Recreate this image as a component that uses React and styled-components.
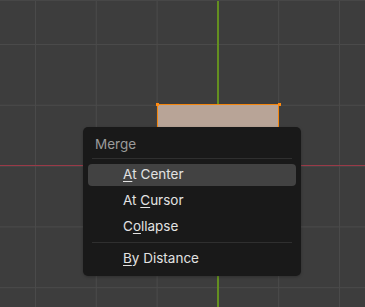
import React from 'react';
import styled, { createGlobalStyle } from 'styled-components';

const Global = createGlobalStyle`
  html, body { margin: 0; padding: 0; background: #3d3d3d; }
  body { font-family: Inter, "DejaVu Sans", sans-serif; }
`;

const Viewport = styled.div`
  position: relative;
  width: 365px;
  height: 307px;
  overflow: hidden;
  background-color: #3d3d3d;
  border-top: 1px solid #474747;
  box-sizing: border-box;
  background-image:
    linear-gradient(to right, #4a4a4a 1px, transparent 1px),
    linear-gradient(to bottom, #4a4a4a 1px, transparent 1px);
  background-size: 60.8px 60.8px;
  background-position: 35px 43px;
`;

const AxisX = styled.div`
  position: absolute;
  left: 0;
  right: 0;
  top: 164px;
  height: 1px;
  background: #9a3a48;
`;

const AxisY = styled.div`
  position: absolute;
  top: 0;
  bottom: 0;
  left: 217px;
  width: 1.5px;
  background: #648f20;
`;

const Face = styled.div`
  position: absolute;
  left: 157px;
  top: 103px;
  width: 122px;
  height: 60px;
  box-sizing: border-box;
  background: #b8a497;
  border: 1.5px solid #f4860e;
`;

const Vertex = styled.div`
  position: absolute;
  top: -2.5px;
  ${p => p.$side}: -2.5px;
  width: 3px;
  height: 3px;
  background: #ff8a10;
`;

const Menu = styled.div`
  position: absolute;
  left: 83px;
  top: 126px;
  width: 218px;
  box-sizing: border-box;
  display: flex;
  flex-direction: column;
  padding: 4px 5px;
  background: #191919;
  border-radius: 5px;
  box-shadow: 0 1px 3px rgba(0, 0, 0, 0.25);
`;

const Title = styled.div`
  display: flex;
  align-items: center;
  height: 25px;
  padding-left: 7px;
  font-size: 13.5px;
  color: #9b9b9b;
`;

const Separator = styled.div`
  height: 1px;
  margin: 2px 4px 3px;
  background: #2f2f2f;
`;

const Item = styled.div`
  display: flex;
  height: 26px;
  padding: 2px 0 2px;
  box-sizing: border-box;
`;

const ItemInner = styled.div`
  flex: 1;
  display: flex;
  align-items: center;
  padding: 0 0 2px 35px;
  border-radius: 4px;
  font-size: 13.5px;
  color: #e2e2e2;
  white-space: pre;
  background: ${p => (p.$active ? '#424242' : 'transparent')};
`;

const Key = styled.span`
  text-decoration: underline;
  text-underline-offset: 2px;
  text-decoration-thickness: 1px;
`;

const MenuItem = ({ before, k, after, active }) => (
  <Item>
    <ItemInner $active={active}>
      {before}<Key>{k}</Key>{after}
    </ItemInner>
  </Item>
);

export default function App() {
  return (
    <>
      <Global />
      <Viewport>
        <AxisY />
        <AxisX />
        <Face>
          <Vertex $side="left" />
          <Vertex $side="right" />
        </Face>
        <Menu>
          <Title>Merge</Title>
          <Separator />
          <MenuItem active before="" k="A" after="t Center" />
          <MenuItem before="At " k="C" after="ursor" />
          <MenuItem before="C" k="o" after="llapse" />
          <Separator />
          <MenuItem before="" k="B" after="y Distance" />
        </Menu>
      </Viewport>
    </>
  );
}
